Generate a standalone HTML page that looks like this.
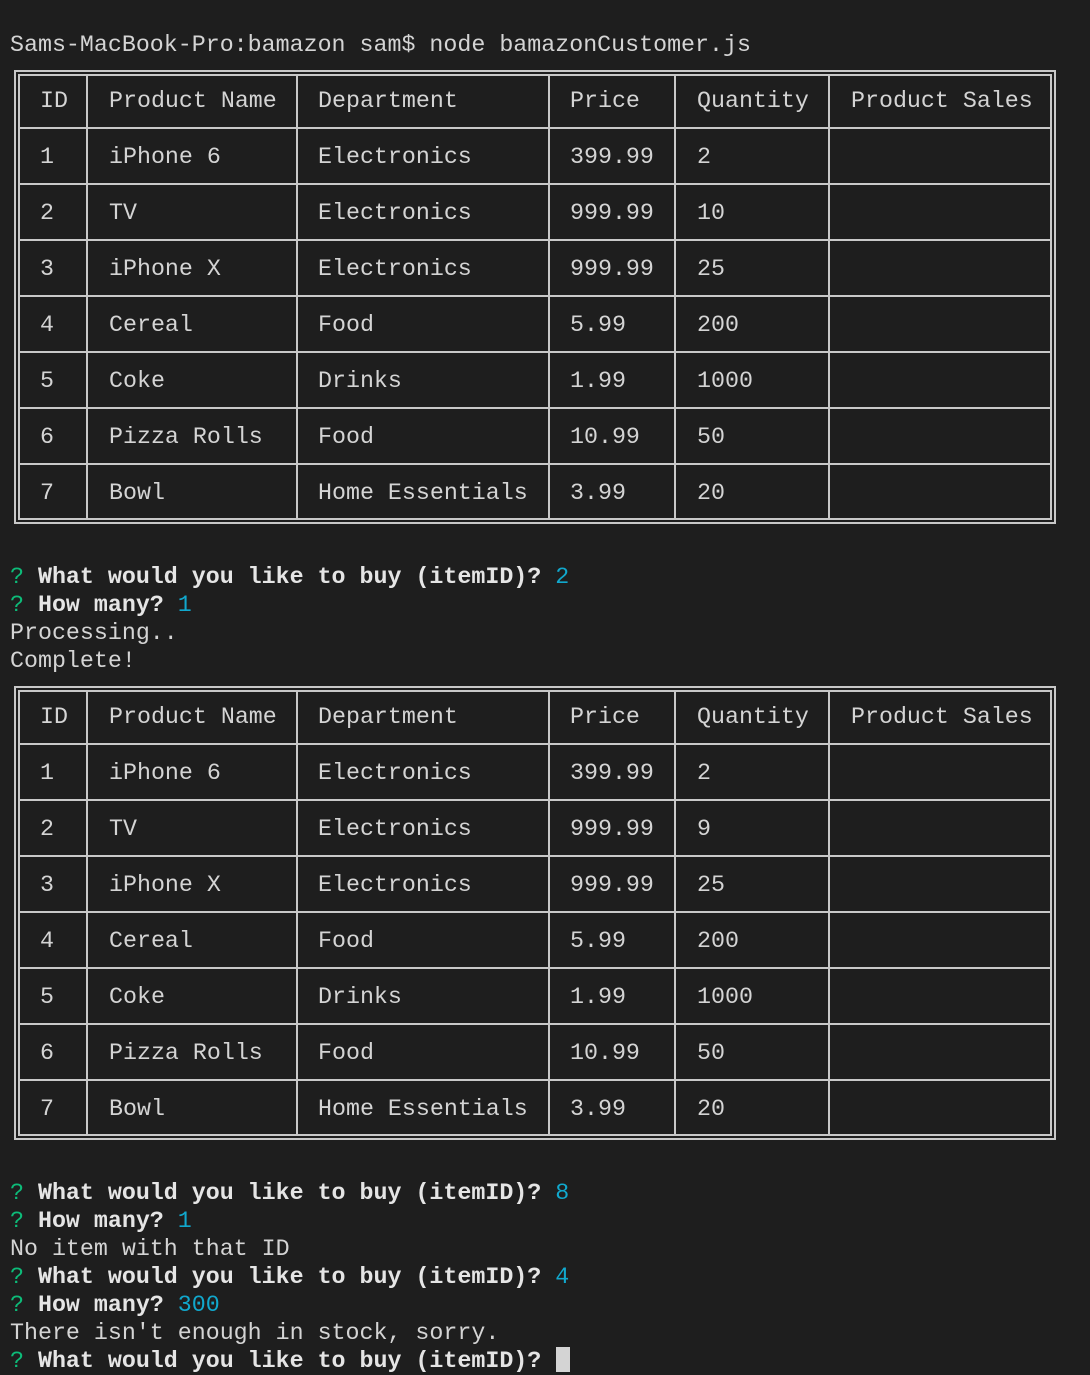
<!DOCTYPE html>
<html><head><meta charset="utf-8"><style>
html,body{margin:0;padding:0;background:#1e1e1e;}
body{width:1090px;height:1372px;position:relative;overflow:hidden;font-family:"Liberation Mono","DejaVu Sans Mono",monospace;font-size:23.3px;color:#d4d4d4;}
.l{position:absolute;left:10px;height:28px;line-height:28px;white-space:pre;}
.g{color:#0dbc79}.c{color:#11a8cd}.b{font-weight:bold;color:#e5e5e5}
.t{position:absolute;left:0;width:1090px;height:460px;}
.h{position:absolute;background:#c8c8c8;height:2px;}
.v{position:absolute;background:#c8c8c8;width:2px;}
.r{position:absolute;left:0;width:1090px;height:56px;line-height:56px;}
.r span{position:absolute;top:1px;white-space:pre;}
.a{left:40px}.p{left:109px}.d{left:318px}.pr{left:570px}.q{left:697px}.s{left:851px}
.cur{position:absolute;left:556px;top:1347px;width:14px;height:25px;background:#d4d4d4;}
</style></head><body>
<div class="l" style="top:31px">Sams-MacBook-Pro:bamazon sam$ node bamazonCustomer.js</div>

<div class="t" style="top:70px">
<div class="h" style="left:14px;top:0;width:1042px"></div>
<div class="h" style="left:14px;top:452px;width:1042px"></div>
<div class="v" style="left:14px;top:0;height:454px"></div>
<div class="v" style="left:1054px;top:0;height:454px"></div>
<div class="h" style="left:18px;top:4px;width:1034px"></div>
<div class="h" style="left:18px;top:448px;width:1034px"></div>
<div class="v" style="left:18px;top:4px;height:446px"></div>
<div class="v" style="left:1050px;top:4px;height:446px"></div>
<div class="h" style="left:18px;top:57px;width:1034px"></div>
<div class="h" style="left:18px;top:113px;width:1034px"></div>
<div class="h" style="left:18px;top:169px;width:1034px"></div>
<div class="h" style="left:18px;top:225px;width:1034px"></div>
<div class="h" style="left:18px;top:281px;width:1034px"></div>
<div class="h" style="left:18px;top:337px;width:1034px"></div>
<div class="h" style="left:18px;top:393px;width:1034px"></div>
<div class="v" style="left:86px;top:4px;height:446px"></div>
<div class="v" style="left:296px;top:4px;height:446px"></div>
<div class="v" style="left:548px;top:4px;height:446px"></div>
<div class="v" style="left:674px;top:4px;height:446px"></div>
<div class="v" style="left:828px;top:4px;height:446px"></div>
<div class="r" style="top:2px"><span class="a">ID</span><span class="p">Product Name</span><span class="d">Department</span><span class="pr">Price</span><span class="q">Quantity</span><span class="s">Product Sales</span></div>
<div class="r" style="top:58px"><span class="a">1</span><span class="p">iPhone 6</span><span class="d">Electronics</span><span class="pr">399.99</span><span class="q">2</span></div>
<div class="r" style="top:114px"><span class="a">2</span><span class="p">TV</span><span class="d">Electronics</span><span class="pr">999.99</span><span class="q">10</span></div>
<div class="r" style="top:170px"><span class="a">3</span><span class="p">iPhone X</span><span class="d">Electronics</span><span class="pr">999.99</span><span class="q">25</span></div>
<div class="r" style="top:226px"><span class="a">4</span><span class="p">Cereal</span><span class="d">Food</span><span class="pr">5.99</span><span class="q">200</span></div>
<div class="r" style="top:282px"><span class="a">5</span><span class="p">Coke</span><span class="d">Drinks</span><span class="pr">1.99</span><span class="q">1000</span></div>
<div class="r" style="top:338px"><span class="a">6</span><span class="p">Pizza Rolls</span><span class="d">Food</span><span class="pr">10.99</span><span class="q">50</span></div>
<div class="r" style="top:394px"><span class="a">7</span><span class="p">Bowl</span><span class="d">Home Essentials</span><span class="pr">3.99</span><span class="q">20</span></div>
</div>

<div class="l" style="top:563px"><span class="g">?</span> <span class="b">What would you like to buy (itemID)?</span> <span class="c">2</span></div>
<div class="l" style="top:591px"><span class="g">?</span> <span class="b">How many?</span> <span class="c">1</span></div>
<div class="l" style="top:619px">Processing..</div>
<div class="l" style="top:647px">Complete!</div>

<div class="t" style="top:686px">
<div class="h" style="left:14px;top:0;width:1042px"></div>
<div class="h" style="left:14px;top:452px;width:1042px"></div>
<div class="v" style="left:14px;top:0;height:454px"></div>
<div class="v" style="left:1054px;top:0;height:454px"></div>
<div class="h" style="left:18px;top:4px;width:1034px"></div>
<div class="h" style="left:18px;top:448px;width:1034px"></div>
<div class="v" style="left:18px;top:4px;height:446px"></div>
<div class="v" style="left:1050px;top:4px;height:446px"></div>
<div class="h" style="left:18px;top:57px;width:1034px"></div>
<div class="h" style="left:18px;top:113px;width:1034px"></div>
<div class="h" style="left:18px;top:169px;width:1034px"></div>
<div class="h" style="left:18px;top:225px;width:1034px"></div>
<div class="h" style="left:18px;top:281px;width:1034px"></div>
<div class="h" style="left:18px;top:337px;width:1034px"></div>
<div class="h" style="left:18px;top:393px;width:1034px"></div>
<div class="v" style="left:86px;top:4px;height:446px"></div>
<div class="v" style="left:296px;top:4px;height:446px"></div>
<div class="v" style="left:548px;top:4px;height:446px"></div>
<div class="v" style="left:674px;top:4px;height:446px"></div>
<div class="v" style="left:828px;top:4px;height:446px"></div>
<div class="r" style="top:2px"><span class="a">ID</span><span class="p">Product Name</span><span class="d">Department</span><span class="pr">Price</span><span class="q">Quantity</span><span class="s">Product Sales</span></div>
<div class="r" style="top:58px"><span class="a">1</span><span class="p">iPhone 6</span><span class="d">Electronics</span><span class="pr">399.99</span><span class="q">2</span></div>
<div class="r" style="top:114px"><span class="a">2</span><span class="p">TV</span><span class="d">Electronics</span><span class="pr">999.99</span><span class="q">9</span></div>
<div class="r" style="top:170px"><span class="a">3</span><span class="p">iPhone X</span><span class="d">Electronics</span><span class="pr">999.99</span><span class="q">25</span></div>
<div class="r" style="top:226px"><span class="a">4</span><span class="p">Cereal</span><span class="d">Food</span><span class="pr">5.99</span><span class="q">200</span></div>
<div class="r" style="top:282px"><span class="a">5</span><span class="p">Coke</span><span class="d">Drinks</span><span class="pr">1.99</span><span class="q">1000</span></div>
<div class="r" style="top:338px"><span class="a">6</span><span class="p">Pizza Rolls</span><span class="d">Food</span><span class="pr">10.99</span><span class="q">50</span></div>
<div class="r" style="top:394px"><span class="a">7</span><span class="p">Bowl</span><span class="d">Home Essentials</span><span class="pr">3.99</span><span class="q">20</span></div>
</div>

<div class="l" style="top:1179px"><span class="g">?</span> <span class="b">What would you like to buy (itemID)?</span> <span class="c">8</span></div>
<div class="l" style="top:1207px"><span class="g">?</span> <span class="b">How many?</span> <span class="c">1</span></div>
<div class="l" style="top:1235px">No item with that ID</div>
<div class="l" style="top:1263px"><span class="g">?</span> <span class="b">What would you like to buy (itemID)?</span> <span class="c">4</span></div>
<div class="l" style="top:1291px"><span class="g">?</span> <span class="b">How many?</span> <span class="c">300</span></div>
<div class="l" style="top:1319px">There isn't enough in stock, sorry.</div>
<div class="l" style="top:1347px"><span class="g">?</span> <span class="b">What would you like to buy (itemID)?</span></div>
<div class="cur"></div>
</body></html>
